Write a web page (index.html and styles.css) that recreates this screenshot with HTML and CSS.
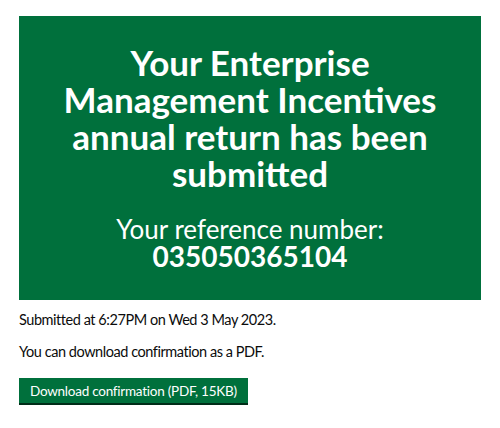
FILE: index.html
```html
<!DOCTYPE html>
<html lang="en">
<head>
  <meta charset="UTF-8">
  <title>Annual return submitted</title>
  <link rel="stylesheet" href="styles.css">
</head>
<body>
  <main class="page">
    <div class="panel">
      <h1 class="panel-title">Your Enterprise Management Incentives annual return has been submitted</h1>
      <div class="panel-body">
        <span class="panel-label">Your reference number:</span>
        <strong class="panel-ref">035050365104</strong>
      </div>
    </div>

    <p class="body-text">Submitted at 6:27PM on Wed 3 May 2023.</p>
    <p class="body-text">You can download confirmation as a PDF.</p>

    <a href="#" class="button">Download confirmation (PDF, 15KB)</a>
  </main>
</body>
</html>
```

FILE: styles.css
```css
body {
  margin: 0;
  font-family: Lato, "Liberation Sans", Arial, sans-serif;
  color: #0b0c0c;
  background: #fff;
}

.page {
  padding: 16px 19px;
}

.panel {
  background: #00703c;
  color: #fff;
  text-align: center;
  padding: 28px 30px 30px;
}

.panel-title {
  margin: 0 0 23px;
  font-size: 35px;
  line-height: 37px;
  font-weight: 700;
}

.panel-label,
.panel-ref {
  display: block;
}

.panel-label {
  font-size: 26px;
  line-height: 28px;
}

.panel-ref {
  font-size: 28px;
  line-height: 27px;
  font-weight: 700;
}

.body-text {
  margin: 10px 0 0;
  font-size: 14.5px;
  line-height: 20px;
  letter-spacing: -0.45px;
}

.body-text + .body-text {
  margin-top: 12px;
}

.button {
  display: inline-block;
  margin-top: 16px;
  padding: 4px 11px 3px;
  background: #00703c;
  color: #fff;
  text-decoration: none;
  font-size: 13.5px;
  line-height: 18px;
  letter-spacing: -0.25px;
  box-shadow: 0 2px 0 #002d18;
}
```
